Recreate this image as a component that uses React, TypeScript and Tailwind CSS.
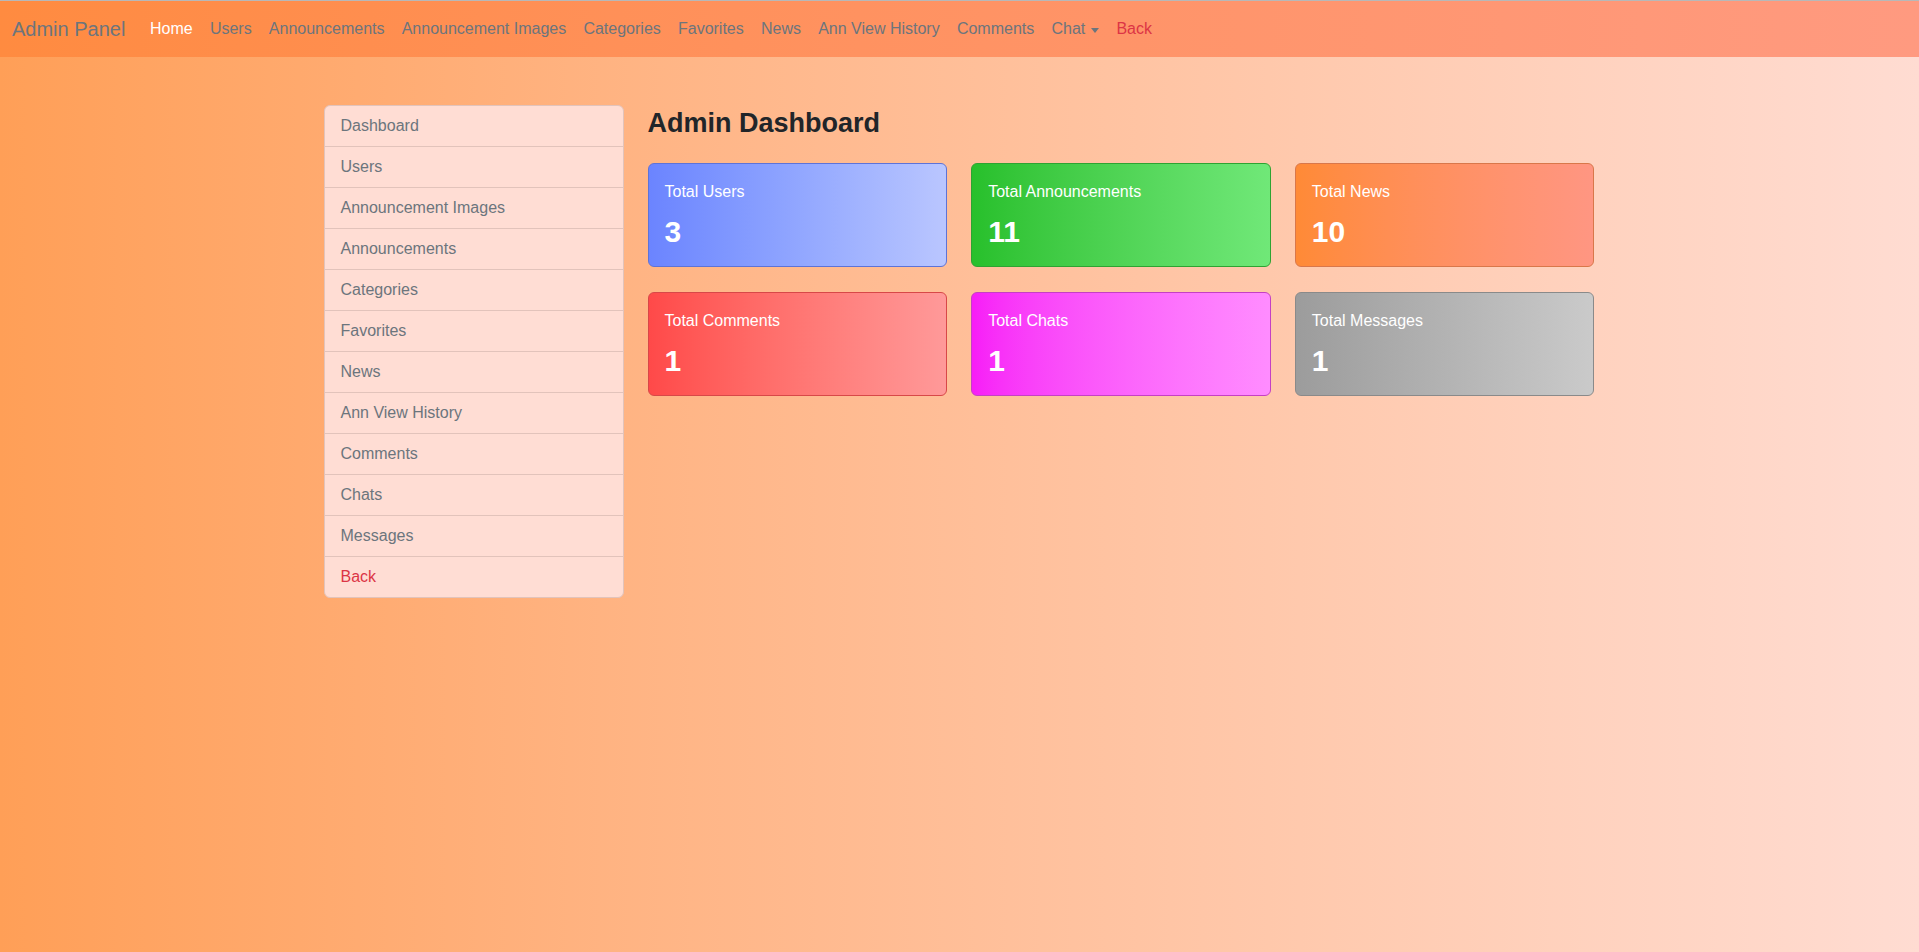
const navLinks = [
  'Users',
  'Announcements',
  'Announcement Images',
  'Categories',
  'Favorites',
  'News',
  'Ann View History',
  'Comments',
];

const sideLinks = [
  'Dashboard',
  'Users',
  'Announcement Images',
  'Announcements',
  'Categories',
  'Favorites',
  'News',
  'Ann View History',
  'Comments',
  'Chats',
  'Messages',
];

const stats = [
  { title: 'Total Users', value: 3, color: 'from-[#6b84ff] to-[#bac6ff] border-[#5d73d8]' },
  { title: 'Total Announcements', value: 11, color: 'from-[#27c02b] to-[#70e878] border-[#2ea332]' },
  { title: 'Total News', value: 10, color: 'from-[#ff8a36] to-[#ff9682] border-[#d9774a]' },
  { title: 'Total Comments', value: 1, color: 'from-[#ff4949] to-[#ff9999] border-[#d84848]' },
  { title: 'Total Chats', value: 1, color: 'from-[#f71cf7] to-[#ff8cff] border-[#c440c4]' },
  { title: 'Total Messages', value: 1, color: 'from-[#9c9c9c] to-[#cacaca] border-[#8a8a8a]' },
];

function Navbar() {
  return (
    <nav className="h-[57px] border-t border-[#b8b8b8] bg-gradient-to-r from-[#ff8b40] to-[#ff9a80] flex items-center px-3">
      <span className="text-[20px] text-[#6c757d] mr-4 leading-[30px]">Admin Panel</span>
      <ul className="flex items-center text-[16px]">
        <li className="px-[8.6px] text-white">Home</li>
        {navLinks.map((link) => (
          <li key={link} className="px-[8.6px] text-[#6c757d]">
            {link}
          </li>
        ))}
        <li className="px-[8.6px] text-[#6c757d] flex items-center">
          Chat
          <span className="ml-[6px] mt-[2px] w-0 h-0 border-x-[4px] border-x-transparent border-t-[5px] border-t-[#6c757d]"></span>
        </li>
        <li className="px-[8.6px] text-[#dc3545]">Back</li>
      </ul>
    </nav>
  );
}

export default function App() {
  return (
    <div
      className="min-h-[952px] bg-gradient-to-r from-[#ff9f57] to-[#ffdcd2]"
      style={{ fontFamily: '"Liberation Sans", Arial, sans-serif' }}
    >
      <Navbar />
      <div className="w-[1272px] mx-auto mt-[48px] flex gap-6">
        <aside className="w-[300px] shrink-0 self-start rounded-md border border-[#e2c3bb] bg-[#ffddd4] overflow-hidden">
          {sideLinks.map((link) => (
            <div key={link} className="px-4 py-2 leading-6 text-[16px] text-[#6c757d] border-b border-[#e2c3bb]">
              {link}
            </div>
          ))}
          <div className="px-4 py-2 leading-6 text-[16px] text-[#dc3545]">Back</div>
        </aside>

        <main className="flex-1 pr-[1px]">
          <h3 className="text-[27px] leading-[1.2] font-bold text-[#212529] mb-6 mt-[2px]">Admin Dashboard</h3>
          <div className="grid grid-cols-3 gap-x-[24px] gap-y-[25px]">
            {stats.map((s) => (
              <div key={s.title} className={`rounded-md border bg-gradient-to-r ${s.color} p-4 text-white`}>
                <div className="text-[16px] leading-6 mb-[10px]">{s.title}</div>
                <div className="text-[30px] leading-[1.2] font-bold">{s.value}</div>
              </div>
            ))}
          </div>
        </main>
      </div>
    </div>
  );
}
